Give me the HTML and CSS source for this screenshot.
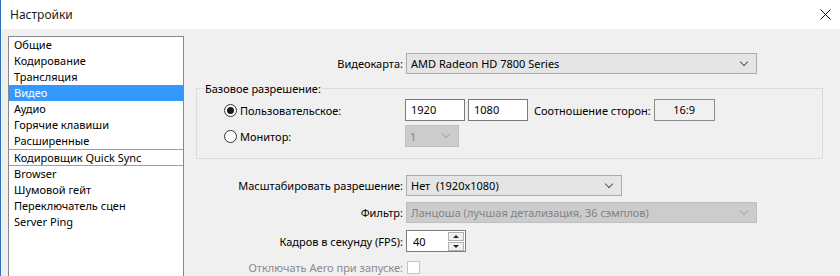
FILE: index.html
```html
<!DOCTYPE html>
<html lang="ru">
<head>
<meta charset="utf-8">
<title>Настройки</title>
<link rel="stylesheet" href="styles.css">
</head>
<body>
<div class="window">
  <header class="titlebar">
    <span class="title">Настройки</span>
    <svg class="close" width="11" height="11" viewBox="0 0 11 11"><path d="M0.5 0.5L10.5 10.5M10.5 0.5L0.5 10.5" stroke="#111" stroke-width="1"/></svg>
  </header>
  <div class="content">
    <ul class="sidebar">
      <li>Общие</li>
      <li>Кодирование</li>
      <li>Трансляция</li>
      <li class="selected">Видео</li>
      <li>Аудио</li>
      <li>Горячие клавиши</li>
      <li>Расширенные</li>
      <li class="sep">Кодировщик Quick Sync</li>
      <li>Browser</li>
      <li>Шумовой гейт</li>
      <li>Переключатель сцен</li>
      <li>Server Ping</li>
    </ul>
    <main class="panel">
      <div class="row row-card">
        <label class="lbl">Видеокарта:</label>
        <div class="combo combo-wide"><span>AMD Radeon HD 7800 Series</span><i class="chev"></i></div>
      </div>
      <fieldset class="group">
        <legend>Базовое разрешение:</legend>
        <div class="grow">
          <div class="radio-lbl"><span class="radio checked"></span>Пользовательское:</div>
          <div class="field">1920</div>
          <div class="field">1080</div>
          <span class="aspect-lbl">Соотношение сторон:</span>
          <div class="ratio">16:9</div>
        </div>
        <div class="grow grow-2">
          <div class="radio-lbl"><span class="radio"></span>Монитор:</div>
          <div class="combo combo-mon disabled"><span>1</span><i class="chev"></i></div>
        </div>
      </fieldset>
      <div class="row row-scale">
        <label class="lbl">Масштабировать разрешение:</label>
        <div class="combo combo-scale"><span>Нет&nbsp; (1920x1080)</span><i class="chev"></i></div>
      </div>
      <div class="row row-filter">
        <label class="lbl">Фильтр:</label>
        <div class="combo combo-wide disabled"><span>Ланцоша (лучшая детализация, 36 сэмплов)</span><i class="chev"></i></div>
      </div>
      <div class="row row-fps">
        <label class="lbl">Кадров в секунду (FPS):</label>
        <div class="spin"><span>40</span>
          <div class="spin-btns">
            <div class="sbtn"><i class="tri-up"></i></div>
            <div class="sbtn"><i class="tri-down"></i></div>
          </div>
        </div>
      </div>
      <div class="row row-aero">
        <label class="lbl muted">Отключать Aero при запуске:</label>
        <span class="check"></span>
      </div>
    </main>
  </div>
</div>
</body>
</html>
```

FILE: styles.css
```css
* { box-sizing: border-box; }
html, body { margin: 0; padding: 0; }
body {
  width: 840px;
  height: 276px;
  overflow: hidden;
  background: #f0f0f0;
  font-family: "Noto Sans", "Open Sans", sans-serif;
  font-size: 11px;
  color: #000;
}
.window {
  height: 276px;
  overflow: hidden;
  border-left: 1px solid #2f6fb5;
  background: #f0f0f0;
}
.titlebar {
  height: 29px;
  background: #fff;
  display: flex;
  align-items: center;
  justify-content: space-between;
  padding: 0 9px 0 9px;
}
.title { font-size: 12px; color: #1a1a1a; }
.close { display: block; }
.content {
  display: flex;
  align-items: flex-start;
}
.sidebar {
  list-style: none;
  margin: 7px 0 0 7px;
  padding: 0;
  width: 176px;
  height: 260px;
  background: #fff;
  border: 1px solid #828790;
}
.sidebar li {
  height: 16px;
  line-height: 16px;
  padding-left: 5px;
  white-space: nowrap;
}
.sidebar li.selected { background: #3399ff; color: #fff; }
.sidebar li.sep {
  height: 17px;
  line-height: 15px;
  border-top: 1px solid #a0a0a0;
  border-bottom: 1px solid #a0a0a0;
}
.panel {
  flex: 1;
  padding: 24px 17px 0 12px;
  display: flex;
  flex-direction: column;
}
.row {
  display: flex;
  align-items: center;
  gap: 3px;
}
.lbl {
  width: 207px;
  text-align: right;
  white-space: nowrap;
}
.muted { color: #8a8a8a; }
.combo {
  height: 21px;
  background: #e5e5e5;
  border: 1px solid #acacac;
  display: flex;
  align-items: center;
  justify-content: space-between;
  padding: 0 9px 0 4px;
  white-space: nowrap;
}
.combo.disabled { background: #cccccc; border-color: #bfbfbf; color: #838383; }
.combo-wide { width: 351px; }
.combo-scale { width: 216px; }
.combo-mon { width: 54px; height: 22px; }
.chev {
  width: 6px;
  height: 6px;
  border-right: 1px solid #5a5a5a;
  border-bottom: 1px solid #5a5a5a;
  transform: rotate(45deg);
  margin-top: -4px;
}
.disabled .chev { border-color: #a8a8a8; }
.group {
  margin: 8px 0 0 0;
  padding: 4px 0 11px 0;
  border: 1px solid #dcdcdc;
  min-width: 0;
}
.group legend {
  margin-left: 7px;
  padding: 0 1px;
  line-height: 13px;
}
.grow {
  display: flex;
  align-items: center;
  height: 22px;
}
.grow-2 { margin-top: 4px; }
.radio-lbl {
  width: 208px;
  padding-left: 27px;
  display: flex;
  align-items: center;
  gap: 3px;
}
.radio {
  width: 13px;
  height: 13px;
  border-radius: 50%;
  border: 1px solid #333;
  background: #fff;
  display: flex;
  align-items: center;
  justify-content: center;
}
.radio.checked::after {
  content: "";
  width: 7px;
  height: 7px;
  border-radius: 50%;
  background: #1a1a1a;
}
.field {
  width: 60px;
  height: 22px;
  background: #fff;
  border: 1px solid #7a7a7a;
  padding-left: 5px;
  line-height: 20px;
  margin-right: 3px;
}
.aspect-lbl { margin-left: 3px; white-space: nowrap; }
.ratio {
  width: 61px;
  height: 22px;
  border: 1px solid #8a8a8a;
  text-align: center;
  line-height: 20px;
  margin-left: 3px;
}
.row-scale { margin-top: 16px; }
.row-filter { margin-top: 6px; }
.row-fps { margin-top: 7px; }
.row-aero { margin-top: 8px; }
.spin {
  width: 60px;
  height: 22px;
  background: #fff;
  border: 1px solid #7a7a7a;
  display: flex;
  align-items: center;
  justify-content: space-between;
  padding: 0 1px 0 6px;
}
.spin-btns {
  display: flex;
  flex-direction: column;
  gap: 1px;
}
.sbtn {
  width: 16px;
  height: 9px;
  background: #f0f0f0;
  border: 1px solid #b0b0b0;
  display: flex;
  align-items: center;
  justify-content: center;
}
.tri-up, .tri-down {
  width: 0;
  height: 0;
  border-left: 3px solid transparent;
  border-right: 3px solid transparent;
}
.tri-up { border-bottom: 3px solid #222; }
.tri-down { border-top: 3px solid #222; }
.check {
  display: block;
  width: 13px;
  height: 13px;
  background: #fff;
  border: 1px solid #c4c4c4;
  margin-left: 1px;
}
```
